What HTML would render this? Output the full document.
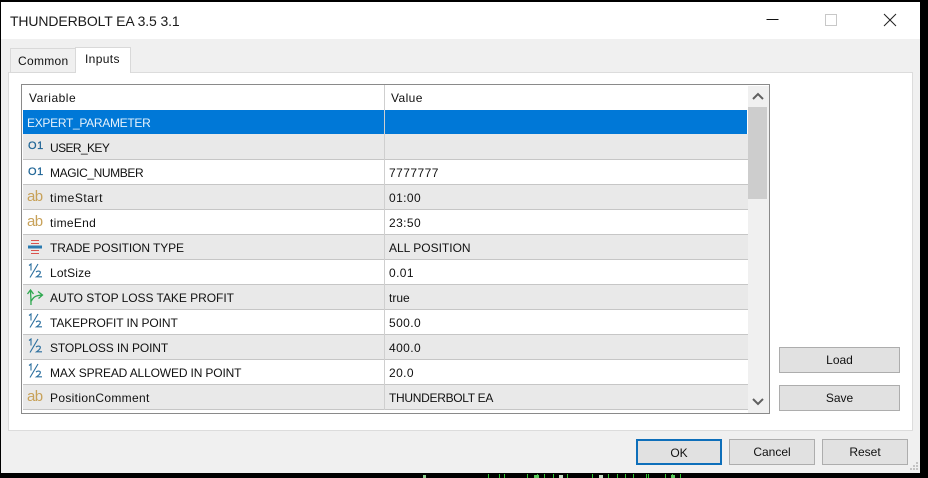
<!DOCTYPE html>
<html><head><meta charset="utf-8">
<style>
html,body{margin:0;padding:0;background:#000;}
body{position:relative;width:928px;height:478px;overflow:hidden;font-family:"Liberation Sans",sans-serif;font-size:12px;color:#111;}
div,svg,span{position:absolute;box-sizing:border-box;}
.t{white-space:nowrap;line-height:14px;}
.row{left:23px;width:725px;height:25px;}
.g{background:#e9e9e9;border-bottom:1px solid #c6c6c6;}
.w{background:#fff;border-bottom:1px solid #c6c6c6;}
.btn{background:#e1e1e1;border:1px solid #adadad;text-align:center;line-height:25px;color:#111;}
.ab{left:27px;font-size:15px;letter-spacing:-.6px;color:#c8a25a;line-height:16px;white-space:nowrap;}
.o1{left:28px;font-size:11px;color:#1f6596;line-height:14px;letter-spacing:.6px;white-space:nowrap;-webkit-text-stroke:.25px #1f6596;}
</style></head><body>
<div style="left:1px;top:2px;width:919px;height:471px;background:#f0f0f0;"></div>
<div style="left:1px;top:2px;width:919px;height:37px;background:#fff;"></div>
<div class="t" style="left:10px;top:12px;font-size:14px;letter-spacing:-.12px;line-height:18px;color:#1a1a1a;">THUNDERBOLT EA 3.5 3.1</div>
<svg style="left:760px;top:8px;" width="150" height="26" viewBox="0 0 150 26">
<path d="M6.500 11.500H18.500" stroke="#111" stroke-width="1" fill="none"/>
<rect x="65.500" y="6.500" width="11" height="11" fill="none" stroke="#c8c8c8"/>
<path d="M124 6L136 18M136 6L124 18" stroke="#222" stroke-width="1" fill="none"/>
</svg>

<div style="left:8px;top:72px;width:905px;height:359px;background:#fff;border:1px solid #dcdcdc;"></div>
<div style="left:10px;top:48px;width:66px;height:25px;background:#f0f0f0;border:1px solid #d9d9d9;"></div>
<div class="t" style="left:18px;top:54px;letter-spacing:.3px;">Common</div>
<div style="left:75px;top:47px;width:56px;height:26px;background:#fff;border:1px solid #d9d9d9;border-bottom:none;"></div>
<div class="t" style="left:85px;top:52px;letter-spacing:.35px;">Inputs</div>

<div style="left:21px;top:84px;width:749px;height:330px;background:#fff;border:1px solid #8a8a8a;"></div>
<div class="t" style="left:29px;top:91px;letter-spacing:.5px;">Variable</div>
<div class="t" style="left:391px;top:91px;letter-spacing:.4px;">Value</div>

<div class="row" style="top:110px;height:24px;width:724px;background:#0078d7;"></div>
<div class="row g" style="top:134px;height:26px;"></div>
<div class="row w" style="top:160px;"></div>
<div class="row g" style="top:185px;"></div>
<div class="row w" style="top:210px;"></div>
<div class="row g" style="top:235px;"></div>
<div class="row w" style="top:260px;"></div>
<div class="row g" style="top:285px;"></div>
<div class="row w" style="top:310px;"></div>
<div class="row g" style="top:335px;"></div>
<div class="row w" style="top:360px;"></div>
<div class="row g" style="top:385px;"></div>
<div style="left:384px;top:85px;width:1px;height:325px;background:#cfcfcf;"></div>

<div class="t" style="left:27px;top:116px;color:#e6f2fb;letter-spacing:-.3px;">EXPERT_PARAMETER</div>
<div class="o1" style="top:139px;">O1</div><div class="t" style="left:50px;top:141px;letter-spacing:-.6px;">USER_KEY</div>
<div class="o1" style="top:165px;">O1</div><div class="t" style="left:50px;top:166px;letter-spacing:-.4px;">MAGIC_NUMBER</div><div class="t" style="left:389px;top:166px;letter-spacing:.45px;">7777777</div>
<div class="ab" style="top:189px;">ab</div><div class="t" style="left:50px;top:191px;letter-spacing:.55px;">timeStart</div><div class="t" style="left:389px;top:191px;letter-spacing:.4px;">01:00</div>
<div class="ab" style="top:214px;">ab</div><div class="t" style="left:50px;top:216px;letter-spacing:.3px;">timeEnd</div><div class="t" style="left:389px;top:216px;letter-spacing:.4px;">23:50</div>
<svg style="left:27px;top:240px;" width="16" height="15" viewBox="0 0 16 15"><path d="M4 .5H12M4 3.500H12" stroke="#d9534f" stroke-width="1" fill="none"/><path d="M1 7H15" stroke="#2a7ab0" stroke-width="3" fill="none"/><path d="M4 10.500H12M4 13.500H12" stroke="#d9534f" stroke-width="1" fill="none"/></svg>
<div class="t" style="left:50px;top:241px;letter-spacing:-.1px;">TRADE POSITION TYPE</div><div class="t" style="left:389px;top:241px;">ALL POSITION</div>

<svg style="left:27px;top:263px;" width="16" height="15" viewBox="0 0 16 15"><path d="M2 2.500L4 1V7.500" stroke="#2a6e9e" stroke-width="1.100" fill="none"/><path d="M3 14.500L11 1" stroke="#2a6e9e" stroke-width="1.100" fill="none"/><path d="M9 9Q11 7.500 13 8.500Q14.500 10.500 9.500 13.800H15" stroke="#2a6e9e" stroke-width="1.100" fill="none"/></svg>
<div class="t" style="left:50px;top:266px;letter-spacing:.15px;">LotSize</div><div class="t" style="left:389px;top:266px;letter-spacing:.4px;">0.01</div>

<svg style="left:26px;top:288px;" width="18" height="18" viewBox="0 0 18 18"><path d="M5 17C5 12 5 10 4.500 3M1.500 6L4.500 2L7.500 6" stroke="#2ea84f" stroke-width="1.300" fill="none"/><path d="M5.300 13C7.500 9 9.500 7.500 16 7M12 3.500L16.500 7L12.500 10.500" stroke="#2ea84f" stroke-width="1.300" fill="none"/></svg>
<div class="t" style="left:50px;top:291px;letter-spacing:-.04px;">AUTO STOP LOSS TAKE PROFIT</div><div class="t" style="left:389px;top:291px;">true</div>

<svg style="left:27px;top:313px;" width="16" height="15" viewBox="0 0 16 15"><path d="M2 2.500L4 1V7.500" stroke="#2a6e9e" stroke-width="1.100" fill="none"/><path d="M3 14.500L11 1" stroke="#2a6e9e" stroke-width="1.100" fill="none"/><path d="M9 9Q11 7.500 13 8.500Q14.500 10.500 9.500 13.800H15" stroke="#2a6e9e" stroke-width="1.100" fill="none"/></svg>
<div class="t" style="left:50px;top:316px;letter-spacing:-.1px;">TAKEPROFIT IN POINT</div><div class="t" style="left:389px;top:316px;letter-spacing:.4px;">500.0</div>

<svg style="left:27px;top:338px;" width="16" height="15" viewBox="0 0 16 15"><path d="M2 2.500L4 1V7.500" stroke="#2a6e9e" stroke-width="1.100" fill="none"/><path d="M3 14.500L11 1" stroke="#2a6e9e" stroke-width="1.100" fill="none"/><path d="M9 9Q11 7.500 13 8.500Q14.500 10.500 9.500 13.800H15" stroke="#2a6e9e" stroke-width="1.100" fill="none"/></svg>
<div class="t" style="left:50px;top:341px;letter-spacing:-.1px;">STOPLOSS IN POINT</div><div class="t" style="left:389px;top:341px;letter-spacing:.4px;">400.0</div>

<svg style="left:27px;top:363px;" width="16" height="15" viewBox="0 0 16 15"><path d="M2 2.500L4 1V7.500" stroke="#2a6e9e" stroke-width="1.100" fill="none"/><path d="M3 14.500L11 1" stroke="#2a6e9e" stroke-width="1.100" fill="none"/><path d="M9 9Q11 7.500 13 8.500Q14.500 10.500 9.500 13.800H15" stroke="#2a6e9e" stroke-width="1.100" fill="none"/></svg>
<div class="t" style="left:50px;top:366px;letter-spacing:-.15px;">MAX SPREAD ALLOWED IN POINT</div><div class="t" style="left:389px;top:366px;letter-spacing:.4px;">20.0</div>

<div class="ab" style="top:389px;">ab</div><div class="t" style="left:50px;top:391px;letter-spacing:.33px;">PositionComment</div><div class="t" style="left:389px;top:391px;letter-spacing:-.3px;">THUNDERBOLT EA</div>

<div style="left:748px;top:86px;width:21px;height:327px;background:#f0f0f0;"></div>
<div style="left:748px;top:107px;width:19px;height:92px;background:#cdcdcd;"></div>
<svg style="left:748px;top:90px;" width="20" height="12" viewBox="0 0 20 12"><path d="M5 9L10 4L15 9" stroke="#606060" stroke-width="2" fill="none"/></svg>
<svg style="left:748px;top:396px;" width="20" height="12" viewBox="0 0 20 12"><path d="M5 3L10 8L15 3" stroke="#606060" stroke-width="2" fill="none"/></svg>

<div class="btn" style="left:779px;top:347px;width:121px;height:26px;">Load</div>
<div class="btn" style="left:779px;top:385px;width:121px;height:26px;">Save</div>
<div class="btn" style="left:636px;top:439px;width:86px;height:26px;border:2px solid #0e6fba;line-height:24px;">OK</div>
<div class="btn" style="left:729px;top:439px;width:86px;height:26px;">Cancel</div>
<div class="btn" style="left:822px;top:439px;width:86px;height:26px;">Reset</div>

<svg style="left:907px;top:461px;" width="13" height="12" viewBox="0 0 13 12"><path d="M9 1h2v2H9zM6 4h2v2H6zM9 4h2v2H9zM3 7h2v2H3zM6 7h2v2H6zM9 7h2v2H9z" fill="#c4c4c4"/></svg>

<svg style="left:0;top:473px;" width="928" height="5" viewBox="0 0 928 5">
<path d="M488.500 1v4M499.500 1v4M504.500 1v4M527.500 1v4M537.500 1v4M544.500 1v4M553.500 1v4M567.500 1v4M592.500 1v4M608.500 1v4M617.500 1v4M625.500 1v4M633.500 1v4M646.500 1v4M648.500 1v4M665.500 1v4M672.500 1v4M680.500 1v4" stroke="#2fc42f" stroke-width="1" fill="none"/>
<rect x="423" y="2" width="3" height="3" fill="#8fcf8f"/><rect x="534" y="2" width="5" height="3" fill="#5ac85a"/><rect x="559" y="2" width="4" height="3" fill="#c5dcc5"/><rect x="599" y="2" width="4" height="3" fill="#c5dcc5"/><rect x="671" y="2" width="4" height="3" fill="#5ac85a"/>
</svg>
</body></html>
